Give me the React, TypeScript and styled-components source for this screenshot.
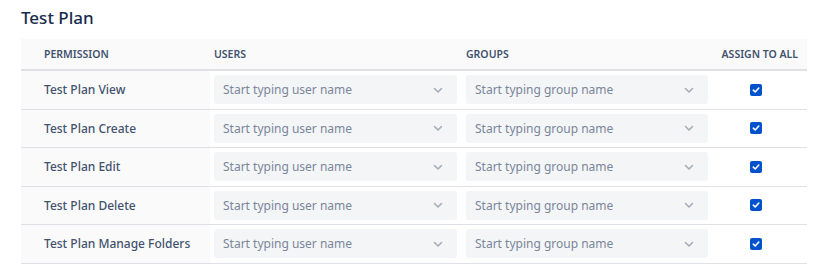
import styled, { createGlobalStyle } from "styled-components";

const GlobalStyle = createGlobalStyle`
  body {
    margin: 0;
    background: #ffffff;
    font-family: "Noto Sans", "Open Sans", Arial, sans-serif;
  }
`;

const Page = styled.div`
  padding: 6px 8px 0 21px;
`;

const Title = styled.h2`
  margin: 0 0 9px;
  font-size: 17px;
  font-weight: 500;
  color: #172b4d;
  line-height: 24px;
`;

const Table = styled.div`
  width: 786px;
  display: grid;
  grid-template-columns: 189px 252px 250px 95px;
`;

const HeadCell = styled.div<{ $first?: boolean; $end?: boolean }>`
  height: 30px;
  display: flex;
  align-items: center;
  justify-content: ${(p) => (p.$end ? "flex-end" : "flex-start")};
  padding: 0 ${(p) => (p.$end ? "9px" : "4px")} 0 ${(p) => (p.$first ? "23px" : p.$end ? "0" : "4px")};
  background: #fafafa;
  border-bottom: 2px solid #dfe1e6;
  font-size: 10.5px;
  font-weight: 600;
  color: #42526e;
  text-transform: uppercase;
`;

const Cell = styled.div<{ $first?: boolean; $center?: boolean }>`
  height: 37.5px;
  display: flex;
  align-items: center;
  justify-content: ${(p) => (p.$center ? "center" : "flex-start")};
  padding: 0 4px 0 ${(p) => (p.$first ? "23px" : "4px")};
  background: ${(p) => (p.$first ? "#fafafa" : "#ffffff")};
  border-bottom: 1px solid #dfe1e6;
  font-size: 12px;
  font-weight: 500;
  color: #42526e;
`;

const Select = styled.div<{ $width: number }>`
  width: ${(p) => p.$width}px;
  height: 29px;
  box-sizing: border-box;
  background: #f4f5f7;
  border-radius: 3px;
  display: flex;
  align-items: center;
  justify-content: space-between;
  padding: 0 13px 0 9px;
  font-size: 12px;
  font-weight: 400;
  color: #7a869a;
`;

const Checkbox = styled.span`
  width: 12px;
  height: 12px;
  margin-left: -8px;
  border-radius: 2px;
  background: #0052cc;
  display: inline-flex;
  align-items: center;
  justify-content: center;
`;

const Chevron = () => (
  <svg width="12" height="12" viewBox="0 0 12 12">
    <path d="M2.5 4.5 L6 8 L9.5 4.5" fill="none" stroke="#a5adba" strokeWidth="1.6" strokeLinecap="round" strokeLinejoin="round" />
  </svg>
);

const Check = () => (
  <svg width="8" height="8" viewBox="0 0 8 8">
    <path d="M1.3 4.2 L3.2 6 L6.8 2" fill="none" stroke="#ffffff" strokeWidth="1.6" strokeLinecap="round" strokeLinejoin="round" />
  </svg>
);

const permissions = [
  "Test Plan View",
  "Test Plan Create",
  "Test Plan Edit",
  "Test Plan Delete",
  "Test Plan Manage Folders",
];

export default function App() {
  return (
    <>
      <GlobalStyle />
      <Page>
        <Title>Test Plan</Title>
        <Table>
          <HeadCell $first>Permission</HeadCell>
          <HeadCell>Users</HeadCell>
          <HeadCell>Groups</HeadCell>
          <HeadCell $end>Assign to all</HeadCell>
          {permissions.map((name) => (
            <>
              <Cell key={name} $first>{name}</Cell>
              <Cell>
                <Select $width={243}>
                  Start typing user name
                  <Chevron />
                </Select>
              </Cell>
              <Cell>
                <Select $width={242}>
                  Start typing group name
                  <Chevron />
                </Select>
              </Cell>
              <Cell $center>
                <Checkbox>
                  <Check />
                </Checkbox>
              </Cell>
            </>
          ))}
        </Table>
      </Page>
    </>
  );
}
